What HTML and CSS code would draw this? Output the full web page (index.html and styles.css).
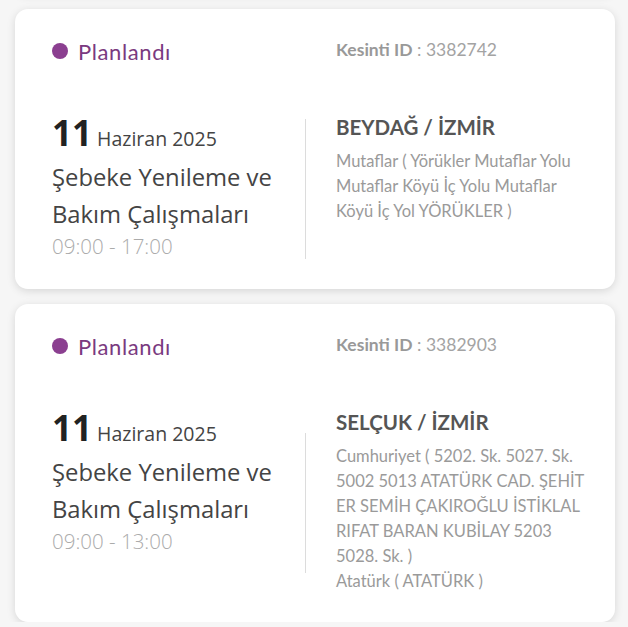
FILE: index.html
```html
<!DOCTYPE html>
<html lang="tr">
<head>
<meta charset="utf-8">
<title>Kesintiler</title>
<link rel="stylesheet" href="styles.css">
</head>
<body>
<div class="list">
  <div class="card">
    <div class="card-head">
      <div class="status"><span class="dot"></span>Planlandı</div>
      <div class="outage-id"><b>Kesinti ID</b> : 3382742</div>
    </div>
    <div class="card-body">
      <div class="when">
        <div class="date"><span class="day">11</span> Haziran 2025</div>
        <div class="title">Şebeke Yenileme ve Bakım Çalışmaları</div>
        <div class="time">09:00 - 17:00</div>
      </div>
      <div class="divider"></div>
      <div class="where">
        <div class="place">BEYDAĞ / İZMİR</div>
        <div class="streets">Mutaflar ( Yörükler Mutaflar Yolu Mutaflar Köyü İç Yolu Mutaflar Köyü İç Yol YÖRÜKLER )</div>
      </div>
    </div>
  </div>
  <div class="card">
    <div class="card-head">
      <div class="status"><span class="dot"></span>Planlandı</div>
      <div class="outage-id"><b>Kesinti ID</b> : 3382903</div>
    </div>
    <div class="card-body">
      <div class="when">
        <div class="date"><span class="day">11</span> Haziran 2025</div>
        <div class="title">Şebeke Yenileme ve Bakım Çalışmaları</div>
        <div class="time">09:00 - 13:00</div>
      </div>
      <div class="divider"></div>
      <div class="where">
        <div class="place">SELÇUK / İZMİR</div>
        <div class="streets">Cumhuriyet ( 5202. Sk. 5027. Sk. 5002 5013 ATATÜRK CAD. ŞEHİT ER SEMİH ÇAKIROĞLU İSTİKLAL RIFAT BARAN KUBİLAY 5203 5028. Sk. )<br>Atatürk ( ATATÜRK )</div>
      </div>
    </div>
  </div>
</div>
</body>
</html>
```
FILE: styles.css
```css
html, body {
  margin: 0;
  padding: 0;
  background: #f6f6f6;
}
body {
  font-family: "Lato", "Noto Sans", sans-serif;
  overflow: hidden;
}
.list {
  display: flex;
  flex-direction: column;
  gap: 15px;
  padding: 0 13px 0 15px;
}
/* bottom edge of the previous (scrolled-away) card */
.list::before {
  content: "";
  display: block;
  height: 20px;
  margin-top: -26px;
  background: #fff;
  border-radius: 0 0 13px 13px;
  box-shadow: 0 2px 8px rgba(0, 0, 0, 0.13);
}
.card {
  background: #fff;
  border-radius: 13px;
  box-shadow: 0 2px 8px rgba(0, 0, 0, 0.13);
  padding: 30px 26px 28px 37px;
}
.card-head {
  display: flex;
  align-items: center;
  height: 24px;
}
.status {
  width: 284px;
  display: flex;
  align-items: center;
  gap: 10px;
  font-size: 22px;
  letter-spacing: 0.6px;
  color: #7a3a80;
}
.dot {
  width: 16px;
  height: 16px;
  border-radius: 50%;
  background: #8b3f90;
}
.outage-id {
  font-size: 17.5px;
  color: #a3a3a3;
  margin-top: -4px;
}
.outage-id b {
  color: #999;
  font-weight: 700;
}
.card-body {
  display: flex;
  align-items: flex-start;
  margin-top: 50px;
}
.when {
  width: 253px;
  font-family: "Open Sans", "Noto Sans", sans-serif;
  color: #444;
}
.date {
  font-size: 19.5px;
  line-height: 40px;
}
.day {
  font-size: 35px;
  font-weight: 700;
  color: #222;
}
.title {
  font-size: 23.8px;
  line-height: 37px;
}
.time {
  font-size: 20.5px;
  line-height: 30px;
  color: #ababab;
  font-weight: 300;
  margin-top: -2px;
}
.divider {
  width: 1px;
  height: 140px;
  background: #dcdcdc;
  align-self: center;
  margin-top: 4px;
}
.where {
  flex: 1;
  padding-left: 30px;
  padding-top: 2px;
}
.place {
  font-size: 20.5px;
  line-height: 24px;
  font-weight: 700;
  color: #555;
}
.streets {
  margin-top: 10px;
  font-size: 16.5px;
  line-height: 25px;
  color: #9a9a9a;
}
```
